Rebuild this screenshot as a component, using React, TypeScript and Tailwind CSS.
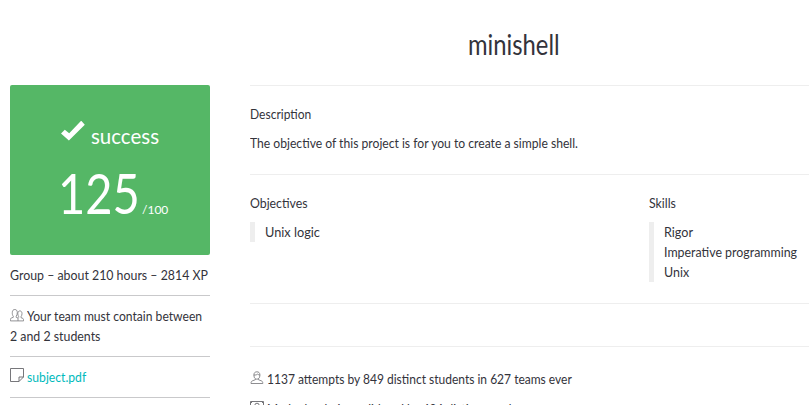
import type { ReactNode } from "react";

function Team() {
  return (
    <svg className="-mt-[2px] h-[13px] w-[14px] shrink-0" viewBox="0 0 14 13" fill="none" stroke="#77777b" strokeWidth="0.8">
      <path d="M.4 11.9V10.500c0-1.300 1-1.600 2.900-2.200V7.300C2.400 6.300 2.200 4.800 2.300 3.500 2.400 1.600 3.200.5 4.800.5s2.500 1.100 2.500 3c0 1.300-.3 2.800-1.100 3.800v1L8 9v2.900z" />
      <path d="M7.800 4.500c.1-1.600.9-2.600 2.100-2.600s2.100 1 2.100 2.600c0 1.200-.3 2.500-1 3.200v1c1.800.5 2.600.9 2.600 2v1.200H8M7.800 4.500c0 1.200.3 2.300.9 3.200v1" />
    </svg>
  );
}

function Note() {
  return (
    <svg className="mt-[1px] h-[14px] w-[14px] shrink-0" viewBox="0 0 14 14" fill="none" stroke="#68686c" strokeWidth="0.9">
      <path d="M.5.5h13v8.500l-4.500 4.500H.5zM13.500 9H9v4.500" />
    </svg>
  );
}

function User() {
  return (
    <svg className="mt-[2px] h-[14px] w-[14px] shrink-0" viewBox="0 0 14 14" fill="none" stroke="#717175" strokeWidth="0.8">
      <path d="M4 3.600C4 1.800 5.100.8 6.900.8s2.900 1 2.900 2.800v1.300c0 1.900-1.200 3.300-2.900 3.300S4 6.800 4 4.900zM3.600 4c2 .2 3.500-.2 4.200-1.100.4.800 1 1.100 2.400 1.100M5.400 7.900v.8L2.300 9.900C1.400 10.300 1 11 1 12.500h11.800c0-1.500-.4-2.200-1.300-2.600L8.400 8.700v-.8" />
    </svg>
  );
}

function Badge() {
  return (
    <svg className="mt-[2px] h-[14px] w-[14px] shrink-0" viewBox="0 0 14 14" fill="none" stroke="#68686c" strokeWidth="0.9">
      <path d="M.5.5h13v10H.5zM.5 2.500l2-2M11.500.5l2 2" />
      <circle cx="7" cy="4.400" r="2.200" />
    </svg>
  );
}

function Items({ children }: { children: ReactNode }) {
  return <ul className="mt-[9px] border-l-[5px] border-[#eeeeee] pl-[10px]">{children}</ul>;
}

export default function App() {
  return (
    <div className="flex h-[405px] w-[809px] overflow-hidden bg-white font-['Lato',sans-serif] text-[14px] leading-[20px] whitespace-nowrap text-[#33333b]">
      <aside className="ml-[10px] w-[200px] shrink-0 pt-[85px]">
        <div className="h-[170px] rounded-[2px] bg-[#55b766] text-white">
          <div className="flex h-[78px] pt-[36px] pl-[51px]">
            <svg className="h-[21px] w-[24px] shrink-0" viewBox="0 0 24 21" fill="currentColor">
              <path d="M0 12.500 3.800 8.700 8.200 12.200 20.200-.3 23.800 3.700 7.900 19.500z" />
            </svg>
            <span className="ml-[6px] inline-block origin-left scale-x-[.975] text-[21px] leading-[30px]">success</span>
          </div>
          <div className="flex items-baseline pl-[48px] leading-[60px]">
            <span className="w-[84px] origin-left scale-x-[.84] text-[56px]">125</span>
            <span className="text-[12px]">/100</span>
          </div>
        </div>
        <p className="h-[41px] border-b border-[#c9c9cb] pt-[10px]"><span className="inline-block origin-left scale-x-[.882]">Group – about 210 hours – 2814 XP</span></p>
        <div className="h-[61px] border-b border-[#c9c9cb] pt-[10px]">
          <p className="flex h-[20px] items-center gap-[3px]"><Team /><span className="inline-block origin-left scale-x-[.865]">Your team must contain between</span></p>
          <p><span className="inline-block origin-left scale-x-[.882]">2 and 2 students</span></p>
        </div>
        <p className="flex h-[41px] items-start gap-[3px] border-b border-[#c9c9cb] pt-[10px] text-[#00babc]"><Note /><span className="inline-block origin-left scale-x-[.87]">subject.pdf</span></p>
      </aside>
      <main className="ml-[40px] w-[559px] shrink-0">
        <h1 className="h-[86px] border-b border-[#eeeeee] pt-[28px] pl-[218px] text-[28px] leading-[32px]"><span className="inline-block origin-left scale-x-[.85]">minishell</span></h1>
        <section className="h-[89px] border-b border-[#eeeeee] pt-[18px]">
          <h2><span className="inline-block origin-left scale-x-[.86]">Description</span></h2>
          <p className="mt-[9px]"><span className="inline-block origin-left scale-x-[.867]">The objective of this project is for you to create a simple shell.</span></p>
        </section>
        <section className="flex h-[129px] border-b border-[#eeeeee] pt-[18px]">
          <div className="w-[399px] shrink-0"><h2><span className="inline-block origin-left scale-x-[.88]">Objectives</span></h2><Items><li><span className="inline-block origin-left scale-x-[.91]">Unix logic</span></li></Items></div>
          <div className="w-[160px] shrink-0"><h2><span className="inline-block origin-left scale-x-[.88]">Skills</span></h2><Items><li><span className="inline-block origin-left scale-x-[.9]">Rigor</span></li><li><span className="inline-block origin-left scale-x-[.885]">Imperative programming</span></li><li><span className="inline-block origin-left scale-x-[.89]">Unix</span></li></Items></div>
        </section>
        <div className="h-[43px] border-b border-[#eeeeee]" />
        <div className="pt-[22px]">
          <p className="flex items-start gap-[3px]"><User /><span className="inline-block origin-left scale-x-[.858]">1137 attempts by 849 distinct students in 627 teams ever</span></p>
          <p className="mt-[10px] flex items-start gap-[3px]"><Badge /><span className="inline-block origin-left scale-x-[.858]">Marked as being validated by 486 distinct students</span></p>
        </div>
      </main>
    </div>
  );
}
